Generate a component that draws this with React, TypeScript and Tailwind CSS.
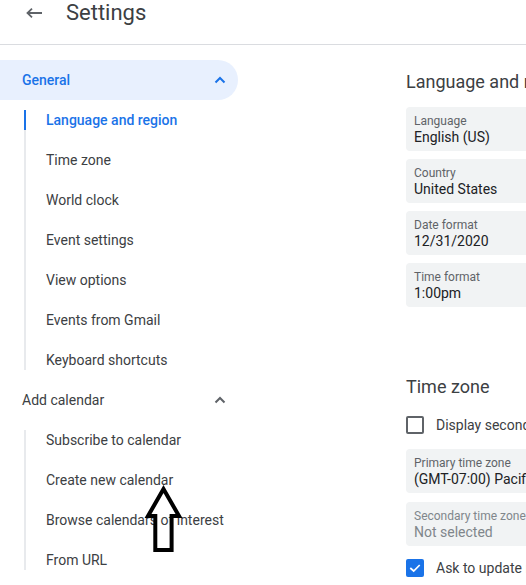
import React from 'react';

const generalItems = [
  'Language and region',
  'Time zone',
  'World clock',
  'Event settings',
  'View options',
  'Events from Gmail',
  'Keyboard shortcuts',
];

const addItems = ['Subscribe to calendar', 'Create new calendar', 'Browse calendars of interest', 'From URL'];

const font = { fontFamily: 'Roboto, "Liberation Sans", sans-serif' };

function Chevron({ className }: { className?: string }) {
  return (
    <svg viewBox="0 0 12 8" fill="none" stroke="currentColor" strokeWidth={2} className={className}>
      <path d="M1.5 6.5 6 2l4.5 4.5" />
    </svg>
  );
}

function SelectCard({ label, value, disabled }: { label: string; value: string; disabled?: boolean }) {
  return (
    <div className="h-[44px] w-[200px] rounded-[4px] bg-[#f1f3f4] px-2 pt-[6px] whitespace-nowrap">
      <div className={`text-[12px] leading-[16px] ${disabled ? 'text-[#80868b]' : 'text-[#5f6368]'}`}>{label}</div>
      <div className={`text-[14px] leading-[17px] ${disabled ? 'text-[#80868b]' : 'text-[#202124]'}`}>{value}</div>
    </div>
  );
}

export default function App() {
  return (
    <div className="relative h-[585px] w-[526px] overflow-hidden bg-white text-[#3c4043]" style={font}>
      <header className="flex h-[45px] items-center border-b border-[#dadce0] pb-[18px]">
        <svg viewBox="0 0 16 10" fill="none" stroke="#5f6368" strokeWidth={1.8} className="ml-[26px] h-[10px] w-[16px]">
          <path d="M16 5H1.5M6 0.7 1.5 5 6 9.3" />
        </svg>
        <span className="ml-[24px] text-[22px] leading-[24px] text-[#3c4043]">Settings</span>
      </header>

      <div className="flex">
        <nav className="w-[238px] shrink-0 pt-[15px] text-[14px]">
          <div className="flex h-10 items-center justify-between rounded-r-full bg-[#e8f0fe] pl-[22px] pr-[12px] font-medium text-[#1a73e8]">
            <span>General</span>
            <Chevron className="h-[8px] w-[12px]" />
          </div>
          <div className="relative">
            <div className="absolute left-[24px] top-[10px] bottom-[10px] w-[2px] bg-[#e8eaed]" />
            {generalItems.map((item, i) => (
              <div key={item} className="relative flex h-10 items-center pl-[46px]">
                {i === 0 && <div className="absolute left-[24px] top-[10px] h-[20px] w-[2px] bg-[#1a73e8]" />}
                <span className={i === 0 ? 'font-medium text-[#1a73e8]' : 'text-[#3c4043]'}>{item}</span>
              </div>
            ))}
          </div>
          <div className="flex h-10 items-center justify-between pl-[22px] pr-[12px] text-[#3c4043]">
            <span>Add calendar</span>
            <Chevron className="h-[8px] w-[12px] text-[#5f6368]" />
          </div>
          <div className="relative">
            <div className="absolute left-[24px] top-[10px] bottom-[10px] w-[2px] bg-[#e8eaed]" />
            {addItems.map((item) => (
              <div key={item} className="flex h-10 items-center whitespace-nowrap pl-[46px] text-[#3c4043]">
                {item}
              </div>
            ))}
          </div>
        </nav>

        <main className="flex flex-col pl-[168px]">
          <h2 className="mt-[25px] whitespace-nowrap text-[18px] leading-[24px] text-[#3c4043]">Language and region</h2>
          <div className="mt-[13px] flex flex-col gap-2">
            <SelectCard label="Language" value="English (US)" />
            <SelectCard label="Country" value="United States" />
            <SelectCard label="Date format" value="12/31/2020" />
            <SelectCard label="Time format" value="1:00pm" />
          </div>

          <h2 className="mt-[68px] whitespace-nowrap text-[18px] leading-[24px] text-[#3c4043]">Time zone</h2>
          <div className="mt-[17px] flex h-[18px] items-center whitespace-nowrap text-[14px]">
            <div className="h-[18px] w-[18px] rounded-[2px] border-2 border-[#5f6368]" />
            <span className="ml-[12px]">Display secondary time zone</span>
          </div>
          <div className="mt-[15px] flex flex-col gap-[9px]">
            <SelectCard label="Primary time zone" value="(GMT-07:00) Pacific Time" />
            <SelectCard label="Secondary time zone" value="Not selected" disabled />
          </div>
          <div className="mt-[13px] flex h-[18px] items-center whitespace-nowrap text-[14px]">
            <div className="flex h-[18px] w-[18px] items-center justify-center rounded-[2px] bg-[#1a73e8]">
              <svg viewBox="0 0 14 10" fill="none" stroke="white" strokeWidth={2} className="h-[10px] w-[12px]">
                <path d="M1.5 5 5.5 8.5 12.5 1.5" />
              </svg>
            </div>
            <span className="ml-[12px]">Ask to update my primary time zone</span>
          </div>
        </main>
      </div>

      <svg
        viewBox="0 0 40 70"
        fill="none"
        stroke="black"
        strokeWidth={4}
        strokeLinejoin="miter"
        className="absolute left-[144px] top-[484px] h-[70px] w-[40px]"
      >
        <path d="M19.5 5 4 32H11.3V66H27.6V32H35Z" />
      </svg>
    </div>
  );
}
